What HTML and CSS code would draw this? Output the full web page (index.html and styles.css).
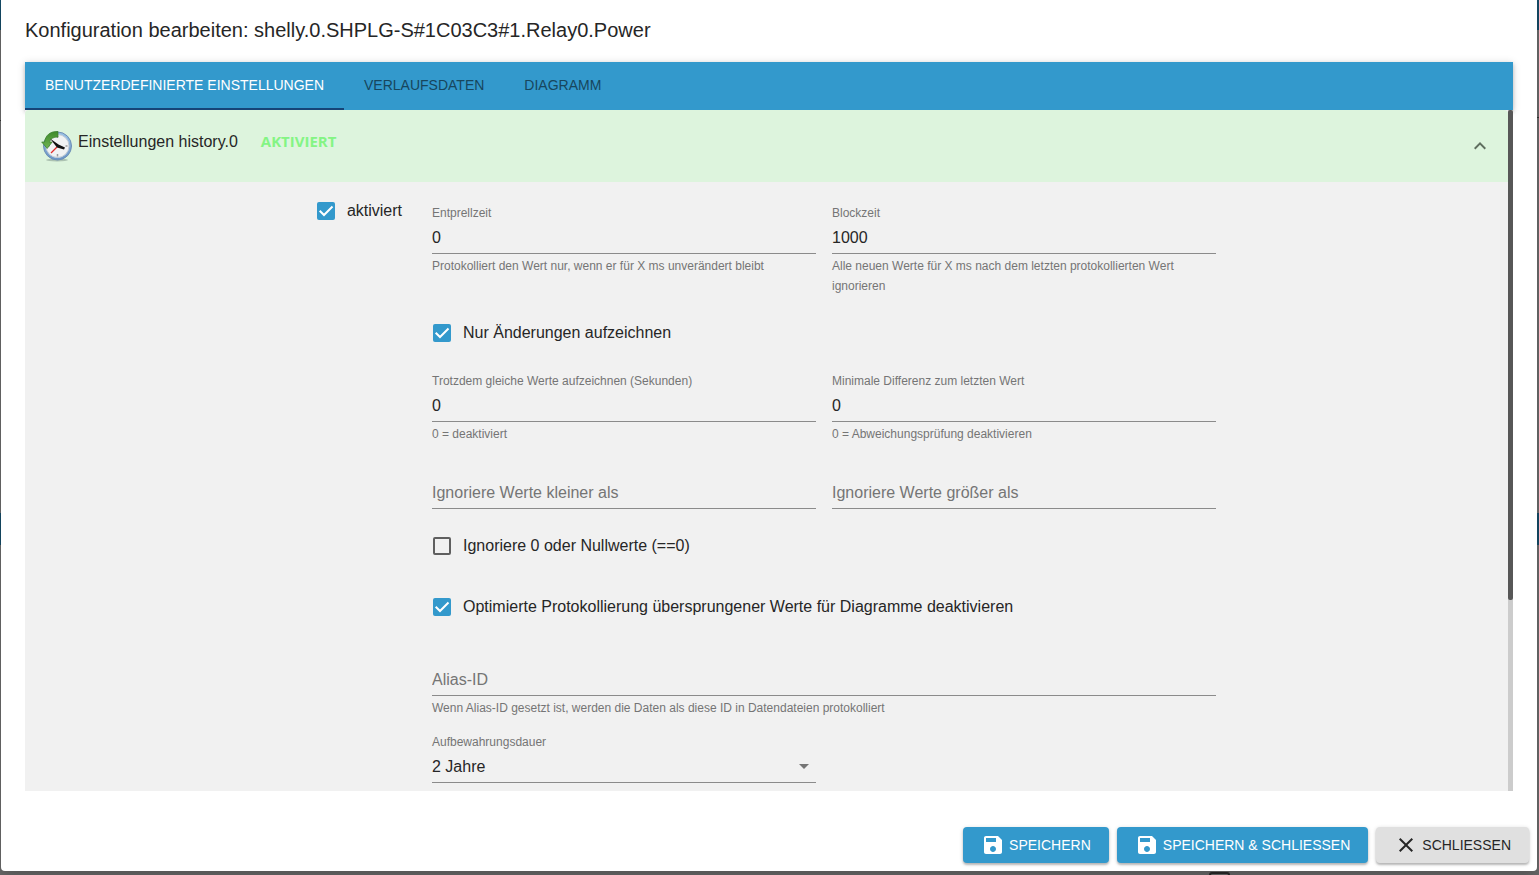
FILE: index.html
```html
<!DOCTYPE html>
<html lang="de">
<head>
<meta charset="utf-8">
<meta name="viewport" content="width=device-width, initial-scale=1">
<title>Konfiguration bearbeiten</title>
<link rel="stylesheet" href="styles.css">
</head>
<body class="backdrop">
<span class="page-box"></span>
<main class="dialog" role="dialog" aria-labelledby="dialog-title">
  <h2 class="dialog-title" id="dialog-title">Konfiguration bearbeiten: shelly.0.SHPLG-S#1C03C3#1.Relay0.Power</h2>
  <div class="content">
    <nav class="tabs" role="tablist">
      <button class="tab tab-active" role="tab" aria-selected="true">BENUTZERDEFINIERTE EINSTELLUNGEN</button>
      <button class="tab" role="tab">VERLAUFSDATEN</button>
      <button class="tab" role="tab">DIAGRAMM</button>
    </nav>
    <div class="panel">
      <div class="scroll">
        <header class="summary">
          <svg class="clock" viewBox="0 0 32 32" aria-hidden="true">
            <defs>
              <linearGradient id="ring" x1="0" y1="0" x2="0" y2="1"><stop offset="0" stop-color="#9cc4e8"/><stop offset="1" stop-color="#6b95c6"/></linearGradient>
              <linearGradient id="arrow" x1="0" y1="0" x2="0" y2="1"><stop offset="0" stop-color="#3f8a2c"/><stop offset="1" stop-color="#6fb452"/></linearGradient>
            </defs>
            <ellipse cx="16" cy="30" rx="11" ry="1.500" fill="#7b8f86" opacity=".5"/>
            <circle cx="16.500" cy="16" r="14" fill="url(#ring)" stroke="#6f8fb5" stroke-width="1"/>
            <circle cx="16.500" cy="16" r="11.500" fill="#f1f2f3" stroke="#c2cbd5" stroke-width="1"/>
            <path d="M16.500 6v2M16.500 24v2.500M6.500 16h2M24.500 16h2" stroke="#9a9a9a" stroke-width="1.500"/>
            <path d="M17 1.500C9 1 4.500 5.500 3.500 12H.7l5.500 6.500 5-6.500H8.500c1-3.500 4-5 8.500-5z" fill="url(#arrow)" stroke="#377b29" stroke-width=".7"/>
            <path d="M16 17l-6 6" stroke="#e02b2b" stroke-width="1.300"/>
            <path d="M9 8.500l8.500 6 6.500 3-1 2-7-2z" fill="#111"/>
          </svg>
          <span class="summary-name">Einstellungen history.0</span>
          <strong class="summary-state">AKTIVIERT</strong>
          <button class="collapse" aria-label="Einklappen">
            <svg viewBox="0 0 24 24" width="24" height="24"><path d="M12 8l-6 6 1.410 1.410L12 10.830l4.590 4.580L18 14z" fill="currentColor"/></svg>
          </button>
        </header>
        <form class="details">
          <div class="enable">
            <label class="check"><input type="checkbox" checked>aktiviert</label>
          </div>
          <div class="fields">
            <div class="field">
              <label class="label" for="debounce">Entprellzeit</label>
              <input class="control" id="debounce" type="text" value="0">
              <p class="help">Protokolliert den Wert nur, wenn er für X ms unverändert bleibt</p>
            </div>
            <div class="field">
              <label class="label" for="block">Blockzeit</label>
              <input class="control" id="block" type="text" value="1000">
              <p class="help">Alle neuen Werte für X ms nach dem letzten protokollierten Wert ignorieren</p>
            </div>
            <label class="check check-row"><input type="checkbox" checked>Nur Änderungen aufzeichnen</label>
            <div class="field">
              <label class="label" for="relog">Trotzdem gleiche Werte aufzeichnen (Sekunden)</label>
              <input class="control" id="relog" type="text" value="0">
              <p class="help">0 = deaktiviert</p>
            </div>
            <div class="field">
              <label class="label" for="mindiff">Minimale Differenz zum letzten Wert</label>
              <input class="control" id="mindiff" type="text" value="0">
              <p class="help">0 = Abweichungsprüfung deaktivieren</p>
            </div>
            <div class="field field-bare">
              <input class="control" type="text" placeholder="Ignoriere Werte kleiner als" aria-label="Ignoriere Werte kleiner als">
            </div>
            <div class="field field-bare">
              <input class="control" type="text" placeholder="Ignoriere Werte größer als" aria-label="Ignoriere Werte größer als">
            </div>
            <label class="check check-row"><input type="checkbox">Ignoriere 0 oder Nullwerte (==0)</label>
            <label class="check check-row"><input type="checkbox" checked>Optimierte Protokollierung übersprungener Werte für Diagramme deaktivieren</label>
            <div class="field field-bare field-wide">
              <input class="control" type="text" placeholder="Alias-ID" aria-label="Alias-ID">
              <p class="help">Wenn Alias-ID gesetzt ist, werden die Daten als diese ID in Datendateien protokolliert</p>
            </div>
            <div class="field">
              <label class="label" for="retention">Aufbewahrungsdauer</label>
              <div class="select">
                <select class="control" id="retention"><option>2 Jahre</option></select>
                <svg class="select-arrow" viewBox="0 0 24 24" aria-hidden="true"><path d="M7 10l5 5 5-5z" fill="currentColor"/></svg>
              </div>
            </div>
          </div>
        </form>
      </div>
      <div class="track"><div class="thumb"></div></div>
    </div>
  </div>
  <footer class="actions">
    <button class="button button-primary">
      <svg viewBox="0 0 24 24" width="24" height="24" aria-hidden="true"><path d="M17 3H5c-1.110 0-2 .9-2 2v14c0 1.100.89 2 2 2h14c1.100 0 2-.9 2-2V7l-4-4zm-5 16c-1.660 0-3-1.340-3-3s1.340-3 3-3 3 1.340 3 3-1.340 3-3 3zm3-10H5V5h10v4z" fill="currentColor"/></svg>
      SPEICHERN
    </button>
    <button class="button button-primary">
      <svg viewBox="0 0 24 24" width="24" height="24" aria-hidden="true"><path d="M17 3H5c-1.110 0-2 .9-2 2v14c0 1.100.89 2 2 2h14c1.100 0 2-.9 2-2V7l-4-4zm-5 16c-1.660 0-3-1.340-3-3s1.340-3 3-3 3 1.340 3 3-1.340 3-3 3zm3-10H5V5h10v4z" fill="currentColor"/></svg>
      SPEICHERN &amp; SCHLIESSEN
    </button>
    <button class="button">
      <svg viewBox="0 0 24 24" width="24" height="24" aria-hidden="true"><path d="M19 6.410L17.590 5 12 10.590 6.410 5 5 6.410 10.590 12 5 17.590 6.410 19 12 13.410 17.590 19 19 17.590 13.410 12z" fill="currentColor"/></svg>
      SCHLIESSEN
    </button>
  </footer>
</main>
</body>
</html>
```
FILE: styles.css
```css
* {
  box-sizing: border-box;
}

body,
h2,
p {
  margin: 0;
}

button,
input,
select {
  font: inherit;
  color: inherit;
}

button {
  border: 0;
  cursor: pointer;
}

.backdrop {
  display: flex;
  height: 100vh;
  padding: 0 2px 4px 1px;
  overflow: hidden;
  font: 16px/24px "Liberation Sans", Arial, sans-serif;
  color: #262626;
  background:
    linear-gradient(#144a66, #144a66) left 0 top 0 / 1px 30px no-repeat,
    linear-gradient(#144a66, #144a66) left 0 top 513px / 1px 32px no-repeat,
    linear-gradient(#144a66, #144a66) right 0 top 0 / 2px 30px no-repeat,
    linear-gradient(#144a66, #144a66) right 0 top 513px / 2px 32px no-repeat,
    linear-gradient(#333, #333) left 0 top 120px / 1px 1px no-repeat,
    linear-gradient(#333, #333) right 0 top 117px / 2px 1px no-repeat,
    linear-gradient(#6a6a6a, #6a6a6a);
}

.page-box {
  position: absolute;
  bottom: -16px;
  left: 1209px;
  z-index: 1;
  width: 21px;
  height: 19px;
  border: 2px solid #222;
  border-radius: 3px;
}

.dialog {
  display: flex;
  flex: 1;
  flex-direction: column;
  min-width: 0;
  background: #fff;
  border-radius: 0 0 4px 4px;
  box-shadow: 0 8px 16px rgba(0, 0, 0, 0.2);
}

.dialog-title {
  padding: 16px 24px 18px;
  font-size: 20px;
  font-weight: 400;
  line-height: 28px;
}

.content {
  display: flex;
  flex: 1;
  flex-direction: column;
  min-height: 0;
  padding: 0 24px;
}

.tabs {
  display: flex;
  flex: none;
  height: 48px;
  background: #3399cc;
  box-shadow: 0 2px 4px rgba(0, 0, 0, 0.2), 0 1px 8px rgba(0, 0, 0, 0.15);
}

.tab {
  padding: 0 20px;
  font-size: 14px;
  color: #17465d;
  background: none;
  border-bottom: 2px solid transparent;
}

.tab-active {
  color: #fff;
  border-bottom-color: #164477;
}

.panel {
  position: relative;
  display: flex;
  flex: 1;
  min-height: 0;
  background: #f1f1f1;
}

.scroll {
  flex: 1;
  min-width: 0;
  overflow-y: auto;
  scrollbar-width: none;
}

.track {
  width: 5px;
  background: #ccc;
}

.thumb {
  height: 72%;
  background: #575757;
  border-radius: 2px;
}

.summary {
  display: flex;
  align-items: flex-start;
  height: 72px;
  padding: 20px 16px;
  background: #ddf4dd;
  border-radius: 4px 4px 0 0;
}

.clock {
  width: 32px;
  height: 32px;
  margin-right: 5px;
}

.summary-state {
  margin-left: 23px;
  font-family: "Open Sans", sans-serif;
  font-weight: 700;
  font-size: 15px;
  line-height: 22px;
  color: #84f484;
}

.collapse {
  display: flex;
  align-self: center;
  margin-left: auto;
  padding: 0;
  color: #5f6e5f;
  background: none;
}

.details {
  display: grid;
  grid-template-columns: 391fr 784fr 276fr;
  padding: 8px 16px 16px;
}

.enable {
  display: flex;
  justify-content: flex-end;
  align-items: flex-start;
  padding: 9px 30px 0 0;
}

.check {
  display: flex;
  align-items: center;
  gap: 12px;
}

.check input {
  flex: none;
  appearance: none;
  width: 18px;
  height: 18px;
  margin: 0;
  border: 2px solid #5f5f5f;
  border-radius: 2px;
}

.check input:checked {
  border: 0;
  background: #3399cc url("data:image/svg+xml,%3Csvg xmlns='http://www.w3.org/2000/svg' viewBox='0 0 18 18'%3E%3Cpath d='M2.700 8.700L7 13 15.500 4.500' fill='none' stroke='white' stroke-width='2'/%3E%3C/svg%3E");
}

.check-row {
  grid-column: 1 / -1;
  height: 45px;
  padding: 0 0 3px 1px;
}

.fields {
  display: grid;
  grid-template-columns: 1fr 1fr;
  gap: 16px;
  padding-top: 15px;
}

.field {
  display: flex;
  flex-direction: column;
  min-width: 0;
}

.field-bare {
  padding-top: 16px;
}

.field-wide {
  grid-column: 1 / -1;
}

.label {
  font-size: 12px;
  line-height: 16px;
  color: #757575;
}

.control {
  width: 100%;
  height: 33px;
  padding: 1px 0 0;
  appearance: none;
  background: none;
  border: 0;
  border-bottom: 1px solid #8b8b8b;
  border-radius: 0;
  outline: 0;
}

.control::placeholder {
  color: #757575;
  opacity: 1;
}

.help {
  padding-top: 2px;
  font-size: 12px;
  line-height: 20px;
  color: #757575;
}

.select {
  position: relative;
  display: flex;
}

.select-arrow {
  position: absolute;
  top: 4px;
  right: 0;
  width: 24px;
  height: 24px;
  color: #757575;
  pointer-events: none;
}

.actions {
  display: flex;
  justify-content: flex-end;
  gap: 8px;
  padding: 36px 8px 8px;
}

.button {
  display: flex;
  align-items: center;
  gap: 4px;
  height: 36px;
  padding: 0 18px;
  font-size: 14px;
  color: #262626;
  background: #e0e0e0;
  border-radius: 4px;
  box-shadow: 0 2px 2px rgba(0, 0, 0, 0.2), 0 1px 4px rgba(0, 0, 0, 0.16);
}

.button-primary {
  color: #fff;
  background: #3399cc;
}
```
